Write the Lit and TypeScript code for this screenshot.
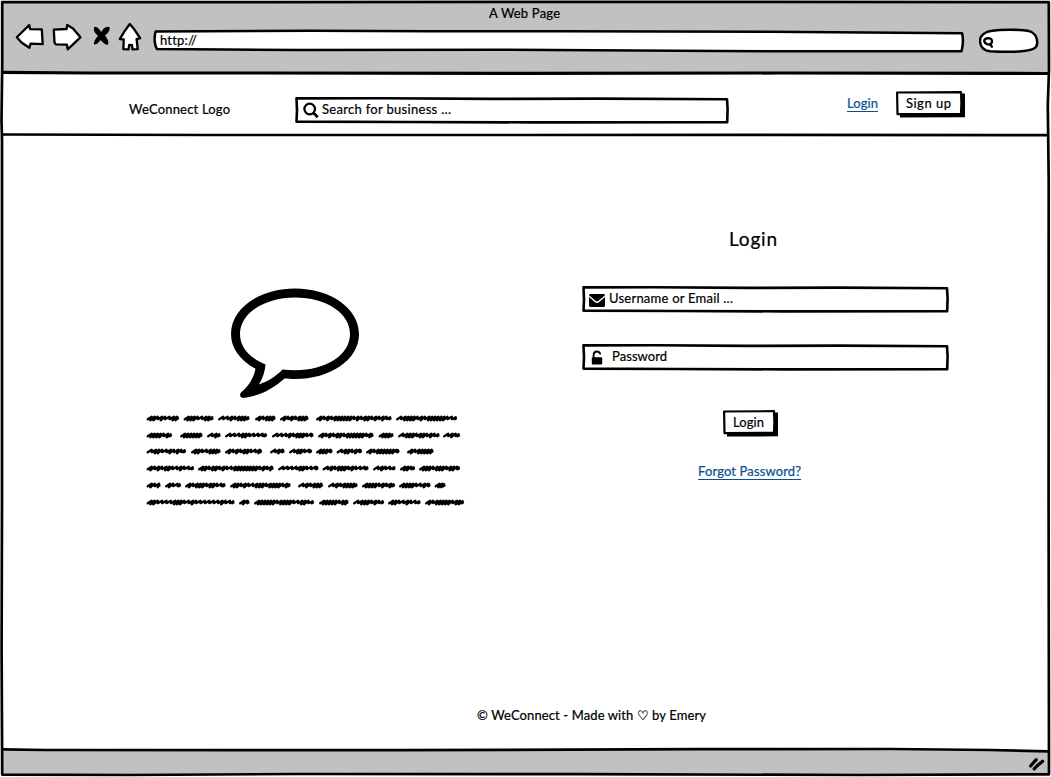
import { LitElement, html, svg, css } from "lit";
import { customElement } from "lit/decorators.js";

/** One line of text set to an exact measure. */
const label = (text: string, width: number, size = 13, height = 18) => html`
  <svg class="label" width=${width} height=${height} viewBox="0 0 ${width} ${height}">
    <text x="0" y=${height - 5} font-size=${size} textLength=${width}>${text}</text>
  </svg>`;

// Start and end of each scribbled word, line by line.
const SCRIBBLES: number[][][] = [
  [[146, 179], [183, 213.5], [217.5, 249.5], [254.5, 275.5], [279.5, 308.5], [315.5, 391.5], [395.5, 457]],
  [[146, 172], [179.5, 202.5], [206.5, 220.5], [224.5, 267], [271.5, 313.5], [317.5, 373.5], [378, 393.5], [397.5, 439.5], [442.5, 460]],
  [[146, 186], [190.5, 220.5], [224.5, 262], [269.5, 284.5], [288.5, 312], [315.5, 332.5], [336, 362], [365.5, 399.5], [406.5, 433.5]],
  [[146, 194], [197.5, 273.5], [277.5, 318.5], [322, 368.5], [372.5, 395.5], [399.5, 415], [418.5, 460]],
  [[146, 160.5], [164.5, 181], [184.5, 225.5], [229.5, 290.5], [297.5, 323], [327.5, 357.5], [361.5, 395], [398.5, 430.5], [434, 445.5]],
  [[146, 234.5], [238.5, 249.5], [253.5, 314], [318.5, 348.5], [352.5, 384], [387.5, 420.5], [424.5, 464]],
];
const LINE_Y = [9.3, 26.3, 42.3, 59.3, 76.3, 93.3];

const scribble = (from: number, to: number, y: number) => {
  const start = from - 143.3;
  const end = to - 146.3;
  let x = start;
  let seed = Math.round(from * 7 + y * 3);
  let d = `M${x} ${y + 1}`;
  while (x < end - 4) {
    seed = (seed * 73 + 41) % 997;
    const dense = seed % 5 > 1;
    const low = dense ? y + 2 : y + 0.9;
    d += `L${(x + 4).toFixed(1)} ${y - 1.6}L${(x + (dense ? 2.6 : 4)).toFixed(1)} ${low}`;
    x += dense ? 3 : 4.4;
  }
  return d + `L${end} ${y - 1}L${end - 1} ${y + 1}L${end + 0.3} ${y + 0.2}`;
};

@customElement("sketch-field")
export class SketchField extends LitElement {
  static properties = { w: { type: Number }, h: { type: Number } };
  declare w: number;
  declare h: number;
  static styles = css`
    :host { display: grid; }
    svg, .content { grid-area: 1 / 1; }
    svg { display: block; }
    .content { display: flex; align-items: center; }
  `;
  render() {
    const { w, h } = this;
    return html`
      <svg width=${w} height=${h}>
        <path d="M1.5 1.4L${w * 0.2} 1.3L${w * 0.45} 1.9L${w * 0.7} 1.6L${w - 2} 2.2L${w - 1.4} ${h * 0.45}L${w - 1.8} ${h - 1.8}L${w * 0.55} ${h - 1.6}L${w * 0.25} ${h - 2}L1.5 ${h - 2.4}L2 ${h * 0.5}Z"
          fill="#fff" stroke="#000" stroke-width="2.6" stroke-linejoin="round"></path>
      </svg>
      <div class="content"><slot></slot></div>`;
  }
}

@customElement("sketch-button")
export class SketchButton extends LitElement {
  static properties = { w: { type: Number } };
  declare w: number;
  static styles = css`
    :host { display: grid; }
    svg, .content { grid-area: 1 / 1; }
    svg { display: block; }
    .content { display: flex; padding: 4px 0 0 10px; }
  `;
  render() {
    const w = this.w;
    return html`
      <svg width=${w} height="27">
        <path d="M4 22L${w - 5} 22V2.5H${w}V26.3L4 26.6Z"></path>
        <path d="M1.1 1.5L${w - 4} 1.2L${w - 3.6} 12L${w - 4} 22.9L1.5 23.2Z" fill="#fff" stroke="#000" stroke-width="2.2" stroke-linejoin="round"></path>
      </svg>
      <div class="content"><slot></slot></div>`;
  }
}

@customElement("app-root")
export class AppRoot extends LitElement {
  static styles = css`
    :host {
      display: grid;
      width: 1051px;
      height: 777px;
      overflow: hidden;
      background: #fff;
      color: #000;
      font-family: Lato, "DejaVu Sans", sans-serif;
      font-variant-ligatures: none;
    }
    svg { display: block; flex: none; }
    .label { overflow: visible; fill: currentColor; stroke: currentColor; stroke-width: 0.22px; }
    .frame, .page { grid-area: 1 / 1; }
    .page { display: grid; grid-template-rows: 74px 62px 614px 27px; }
    .chrome { display: grid; grid-template-rows: 23px 1fr; }
    .title { display: flex; padding: 5px 0 0 489px; }
    .tools { display: flex; align-items: flex-start; }
    .nav-icons { margin-left: 14px; }
    .address { display: grid; }
    .address > * { grid-area: 1 / 1; }
    .url { padding: 9px 0 0 16px; }
    .find { margin-left: 13px; }
    .header { display: flex; align-items: flex-start; }
    .logo { padding: 27px 0 0 129px; }
    .search { margin: 23px 0 0 65px; }
    .lens { margin: 0 3px 0 8px; }
    .signin { margin: 21px 0 0 118px; }
    .signup { margin: 17px 0 0 18px; }
    a { display: block; color: #0b4f93; text-decoration: none; border-bottom: 1px solid #0b4f93; height: 16px; }
    .main { display: grid; grid-template-columns: 582px 1fr; grid-template-rows: 566px 1fr; }
    .intro { padding: 151px 0 0 145px; }
    .bubble { margin-left: 84px; }
    .words { margin-top: 9px; }
    .form { display: grid; align-content: start; justify-items: start; }
    .heading { padding: 91px 0 0 147px; }
    .user { margin-top: 35px; }
    .pass { margin-top: 31px; }
    .mail { margin: 1px 4px 0 7px; }
    .lock { margin: 0 9px 0 9px; }
    .submit { margin: 39px 0 0 141px; }
    .forgot { margin: 26px 0 0 116px; }
    .footer { grid-column: 1 / -1; display: flex; padding: 5px 0 0 477px; }
    .status { display: flex; justify-content: flex-end; padding: 7px 5px 0 0; }
    .field-text { display: block; margin-top: -2px; }
  `;

  render() {
    return html`
      <svg class="frame" width="1051" height="777" fill="none" stroke="#000" stroke-width="2.7" stroke-linejoin="round">
        <path d="M2 2H1048V73L2 73Z" fill="#c1c1c1" stroke="none"></path>
        <path d="M2 749.8L700 749.2L1048 751V774H2Z" fill="#c1c1c1" stroke="none"></path>
        <path d="M2.2 2L260 2.2L700 1.8L1048.8 2.2L1049 70L1047.8 105L1048.7 180L1048.6 500L1049 774.3L860 775L580 774.2L300 774L130 775L2.2 774.6L1.6 650L2 500L2 140L1.5 120L2.2 65Z"></path>
        <path d="M2 72.4L90 73L260 73L520 73.4L780 73L1048 73.5" stroke-width="3.2"></path>
        <path d="M2 134.5L210 135L500 135L740 134.8L1048 135.2"></path>
        <path d="M2 749.4L45 750L400 750.2L700 749.2L890 749L990 750L1048 751.4"></path>
      </svg>

      <div class="page">
        <div class="chrome">
          <div class="title">${label("A Web Page", 71)}</div>
          <div class="tools">
            <svg class="nav-icons" width="130" height="30" viewBox="14 23 130 30" fill="#fff" stroke="#000" stroke-width="2.3" stroke-linejoin="round" stroke-linecap="round">
              <path d="M16.8 37.3L29.2 25.1L30.2 29.2L41.8 29.3L42.7 44.1L30.5 43.7L29.4 47.8L21.5 42.5Z"></path>
              <path d="M53.8 29.6L66.6 29L67.2 25L73 28.5L80.4 37.3L67.7 49.3L66.9 44.6L55.8 44.3L54.5 42.500Z"></path>
              <path d="M94.8 27.5C97.400 27.200 99.200 30 101.200 33.500C103.200 29.700 105.400 26.700 109 27.700C109.400 30.500 106.500 33.500 103.900 35.500C107.400 38.700 108.200 42.500 107.300 44C103.800 43.600 102.100 41 100.600 38.800C98.500 41.700 97 44 94.600 43.800C94.800 40.500 97.300 37.600 99 35.700C95.500 33.200 94.200 29.800 94.800 27.500Z" fill="#000" stroke-width="1.5"></path>
              <path d="M129.800 24L134.600 29.800L140.100 38.200L136.600 39.100L137.700 49.100L132.500 49.300L132 45.200L129.200 44.800L128.600 49.300L123.400 49.100L123.700 39.400L119.800 39.200L124.300 31.700Z"></path>
            </svg>
            <div class="address">
              <svg width="822" height="30" viewBox="144 23 822 30">
                <path d="M155.600 31.600L310 30.800L430 31.300L560 31.300L770 31.800L962 33.200C963.400 38 962.800 46 961.600 51.300L770 51.200L500 49.800L300 50L157 49C154.100 45 154.200 36 155.600 31.600Z" fill="#fff" stroke="#000" stroke-width="2.500" stroke-linejoin="round"></path>
              </svg>
              <div class="url">${label("http://", 37)}</div>
            </div>
            <svg class="find" width="62" height="30" viewBox="979 23 62 30" fill="none" stroke="#000" stroke-linecap="round">
              <path d="M980 41C979.800 35.500 985 31.500 992 30.700C1003 29 1021 29.500 1029 31.100C1035 32.700 1037.300 38 1037.200 43C1037 48 1033.500 49.500 1026 50.800C1013 52.800 1002 51.800 990 51.200C983.500 50.600 980.200 46.200 980 41Z" fill="#fff" stroke-width="2.500"></path>
              <path d="M987.700 38.200C991.300 37.800 992.400 40 991.800 42.600C991.200 45 987.500 45.300 985.400 43.200C983 40.600 985 38.200 987.700 38.200M990 44L991.800 46.700" stroke-width="2.400"></path>
            </svg>
          </div>
        </div>

        <div class="header">
          <div class="logo">${label("WeConnect Logo", 101)}</div>
          <sketch-field class="search" .w=${434} .h=${27}>
            <svg class="lens" width="16" height="17" viewBox="0 0 16 17" fill="none" stroke="#000">
              <circle cx="6.7" cy="7" r="5.3" stroke-width="2.3"></circle>
              <path d="M10.4 10.8L14.7 15.2" stroke-width="2.8"></path>
            </svg>
            <span class="field-text">${label("Search for business ...", 129)}</span>
          </sketch-field>
          <a class="signin">${label("Login", 31)}</a>
          <sketch-button class="signup" .w=${69}>${label("Sign up", 45)}</sketch-button>
        </div>

        <div class="main">
          <div class="intro">
            <svg class="bubble" width="132" height="113" viewBox="229 287 132 113">
              <path fill-rule="evenodd" d="M295 288.5C330 288.5 359 308 359 334C359 360 330 379 295 379C291 379 287.5 378.8 284.5 378.5C273 389 260 395.5 245 397.8C240 398.5 238.5 394.5 242 391.5C249 385.5 253.5 378.5 255.5 368.8C240 360.5 231 348 231 334C231 308 260 288.5 295 288.5ZM295 297.5C265 297.5 240 313 240 334C240 347 249 357.5 265.5 364.5C265 371.5 262.5 378.5 259 384.5C267 382 275.5 377 282.5 369.6C286.5 370 291 370.2 295 370.2C326 370.2 350 355 350 334C350 313 326 297.5 295 297.5Z"></path>
            </svg>
            <svg class="words" width="322" height="104" fill="none" stroke="#000" stroke-width="2.3" stroke-linejoin="round" stroke-linecap="round">
              ${SCRIBBLES.map((line, i) => line.map(([a, b]) => svg`<path d=${scribble(a, b, LINE_Y[i])}></path>`))}
            </svg>
          </div>
          <div class="form">
            <div class="heading">${label("Login", 48, 19, 24)}</div>
            <sketch-field class="user" .w=${367} .h=${27}>
              <svg class="mail" width="16" height="13" viewBox="0 0 16 13">
                <path d="M1.2 0H14.8Q16 0 16 1.3L9.3 7.1Q8 8 6.7 7.1L0 1.3Q0 0 1.2 0ZM0 3L6 8.3Q8 9.7 10 8.3L16 3V11.6Q16 13 14.8 13H1.2Q0 13 0 11.6Z"></path>
              </svg>
              <span class="field-text">${label("Username or Email ...", 124)}</span>
            </sketch-field>
            <sketch-field class="pass" .w=${367} .h=${27}>
              <svg class="lock" width="12" height="16" viewBox="0 0 12 16">
                <path d="M2.6 8V5C2.6 0.4 9.2 0.4 9.2 4.6" fill="none" stroke="#000" stroke-width="1.8"></path>
                <rect x="0.8" y="7.2" width="10.4" height="7.2" rx="1"></rect>
              </svg>
              <span class="field-text">${label("Password", 55)}</span>
            </sketch-field>
            <sketch-button class="submit" .w=${55}>${label("Login", 31)}</sketch-button>
            <a class="forgot">${label("Forgot Password?", 103)}</a>
          </div>
          <div class="footer">${label("© WeConnect - Made with ♡ by Emery", 229)}</div>
        </div>

        <div class="status">
          <svg width="17" height="14" viewBox="0 0 17 14" fill="none" stroke="#000" stroke-width="3.2" stroke-linecap="round">
            <path d="M1.6 9L4 6.200L7.200 2.700M5.200 11.800L8.800 8.200L13.600 4.300"></path>
          </svg>
        </div>
      </div>`;
  }
}
